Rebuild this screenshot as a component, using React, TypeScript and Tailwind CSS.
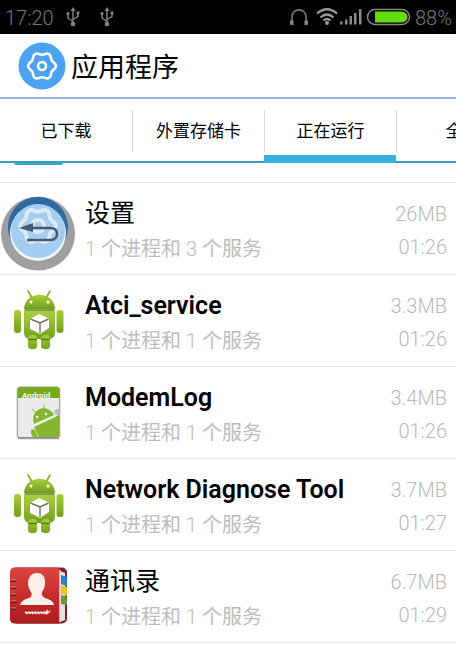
import React from "react";

const gear = (cx: number, cy: number, r: number, bump: number) => {
  const pts: string[] = [];
  for (let i = 0; i <= 96; i++) {
    const a = (i / 96) * Math.PI * 2;
    const d = r + bump * Math.cos(6 * a);
    pts.push(`${(cx + d * Math.cos(a)).toFixed(2)} ${(cy + d * Math.sin(a)).toFixed(2)}`);
  }
  return "M" + pts.join("L") + "Z";
};

function UsbIcon() {
  return (
    <svg width="14" height="20" viewBox="0 0 14 20" fill="none" stroke="#858585" strokeWidth="1.4" aria-hidden="true">
      <path d="M7 3V16M7 14.5L2 11V7M7 12.5L12 9.5V6" />
      <path d="M7 0L9.4 4H4.6Z" fill="#858585" stroke="none" />
      <circle cx="7" cy="17" r="2.3" fill="#858585" stroke="none" />
      <circle cx="2" cy="6.5" r="1.5" fill="#858585" stroke="none" />
      <rect x="10.6" y="4.5" width="2.8" height="2.8" fill="#858585" stroke="none" />
    </svg>
  );
}

function StatusIcons() {
  return (
    <svg width="122" height="20" viewBox="0 0 122 20" fill="none" aria-hidden="true">
      <path d="M3 17V10C3 0.500 17 0.500 17 10V17" stroke="#777" strokeWidth="1.600" />
      <path d="M1 13.500H4.500V18H2Q1 18 1 16.500ZM15.500 13.500H19V16.500Q19 18 18 18H15.500Z" fill="#888" />
      <g stroke="#999" strokeWidth="2.200">
        <path d="M28 6.500Q38 -2 48 6.500" />
        <path d="M31.500 10.500Q38 4.500 44.500 10.500" />
        <path d="M34.500 13.500Q38 10.500 41.500 13.500" />
      </g>
      <circle cx="38" cy="16" r="2" fill="#999" />
      <path d="M51 14.500h2.500v3h-2.500zM56 12.500h2.500v5h-2.500zM60.500 9h2.500v8.500h-2.500zM65 6h2.500v11.500h-2.500zM70 2h2.500v15.500h-2.500z" fill="#8a8a8a" />
      <rect x="78.500" y="2.500" width="42" height="15" rx="7.500" stroke="#888" strokeWidth="1.500" />
      <path d="M86 4.500H112Q118.500 5 118.500 10T112 15.500H86Z" fill="#63dc10" />
    </svg>
  );
}

function HeaderIcon() {
  return (
    <svg width="48" height="48" viewBox="0 0 48 48" fill="none" aria-hidden="true">
      <circle cx="24" cy="24" r="23.500" fill="#4ba3f2" />
      <path d={gear(24, 24, 12.5, 1.3)} stroke="#fff" strokeWidth="2.600" />
      <circle cx="24" cy="24" r="4" stroke="#fff" strokeWidth="2.600" />
    </svg>
  );
}

function SettingsIcon() {
  return (
    <svg width="78" height="91" viewBox="0 1 78 91" fill="none" aria-hidden="true">
      <circle cx="38" cy="51.500" r="37" fill="#9e9fa1" />
      <circle cx="38" cy="45" r="30" fill="#2e6a9e" />
      <circle cx="38" cy="51" r="28" fill="#f0f6fb" />
      <circle cx="38" cy="49" r="27" fill="#a5cdf2" />
      <path d={gear(38, 44, 16, 1.7)} stroke="#dcebf9" strokeWidth="4" />
      <circle cx="38" cy="44" r="6" stroke="#dcebf9" strokeWidth="4" />
      <path d="M25 46H50Q57 46 57 52T50 58H27" stroke="#48586c" strokeWidth="2.400" />
      <path d="M19 46L33 41V50Z" fill="#48586c" />
    </svg>
  );
}

function RobotIcon({ id }: { id: string }) {
  return (
    <svg width="78" height="91" viewBox="0 1 78 91" fill="none" aria-hidden="true">
      <defs>
        <linearGradient id={id} x1="0" y1="0" x2="0" y2="1">
          <stop offset="0" stopColor="#a9cf3a" />
          <stop offset="1" stopColor="#719f1c" />
        </linearGradient>
      </defs>
      <path d="M28 17L32 24M50 17L46 24" stroke="#80a82d" strokeWidth="1.600" strokeLinecap="round" />
      <g fill={`url(#${id})`}>
        <path d="M24 35C25 16 54 16 55 35Z" />
        <path d="M24 37H55V58Q55 65 49 65H30Q24 65 24 58Z" />
        <rect x="14" y="36" width="7" height="23" rx="3" />
        <rect x="56.500" y="36" width="7" height="23" rx="3" />
        <rect x="28" y="61" width="9" height="14" rx="3.500" />
        <rect x="41" y="61" width="9" height="14" rx="3.500" />
      </g>
      <path d="M24.500 36H54.500M28 65.500H37M41 65.500H50" stroke="#567d18" strokeWidth="1.400" />
      <circle cx="31" cy="28" r="1.500" fill="#fff" />
      <circle cx="48" cy="28" r="1.500" fill="#fff" />
      <path d="M39 40L49 44.500V54L40 60L30 55V45Z" fill="#fff" />
      <path d="M30.500 45L40 49L48.500 45M40 49V59" stroke="#6b7554" strokeWidth="1.400" />
    </svg>
  );
}

function ModemIcon() {
  return (
    <svg width="78" height="91" viewBox="0 1 78 91" fill="none" aria-hidden="true">
      <rect x="16.500" y="21" width="44" height="52.500" rx="4" fill="#cfcfcf" />
      <rect x="17.500" y="21" width="42" height="50.500" rx="2.500" fill="#ebebeb" stroke="#a5a5a5" />
      <path d="M17.500 32V23.500Q17.500 21 20.500 21H57Q59.500 21 59.500 23.500V32Z" fill="#76a91c" />
      <text x="22" y="32" fill="#f5faeb" fontSize="8" fontWeight="700" fontFamily="Roboto, sans-serif">Android</text>
      <circle cx="57.500" cy="46" r="3" fill="#bbb" />
      <g fill="#85b62e">
        <path d="M34 58C29 43 47 36 54 49Z" />
        <path d="M34 61L55 51L59 49V71H39Z" />
        <path d="M31 64Q34 62 36 66L38 71H33Q30 67 31 64Z" />
      </g>
      <path d="M36 47L32 43M44 43V39" stroke="#85b62e" strokeLinecap="round" />
      <circle cx="37" cy="51" r="1.200" fill="#fff" />
      <circle cx="46" cy="48" r="1.200" fill="#fff" />
      <path d="M34 59.500L55 50" stroke="#f2f2f2" strokeWidth="1.500" />
      <path d="M18 72H59" stroke="#777" />
    </svg>
  );
}

function ContactsIcon() {
  return (
    <svg width="78" height="91" viewBox="0 1 78 91" fill="none" aria-hidden="true">
      <defs>
        <linearGradient id="book" x1="0" y1="0" x2="0" y2="1">
          <stop offset="0" stopColor="#dc4540" />
          <stop offset="0.550" stopColor="#c52a2a" />
          <stop offset="1" stopColor="#a91b1d" />
        </linearGradient>
      </defs>
      <rect x="11" y="17.500" width="56" height="56" rx="5" fill="#7d2226" />
      <path d="M60 21L65 23V70L60 72Z" fill="#e6e2dc" />
      <path d="M61 25L67 27V36L61 34Z" fill="#2583c6" />
      <path d="M61 35L67 37V46L61 44Z" fill="#efc22d" />
      <path d="M61 45L67 47V55L61 54Z" fill="#5c9c38" />
      <path d="M15 17.500H56Q60 17.500 60 21V73.500H15Q10 73.500 10 69V22Q10 17.500 15 17.500Z" fill="url(#book)" />
      <path d="M60 20V72" stroke="#f1dada" strokeWidth="1.500" />
      <path d="M20 55Q21 50 29 48Q33 46 31 42Q28 38 28 32Q29 23 37 23T45 32Q45 38 42 42Q41 46 45 48Q53 50 54 55Z" fill="#fceeea" />
      <g stroke="#591b20" strokeWidth="2">
        <path d="M11 31H16M11 38H16M11 45H16M11 52H16M11 59H16" />
      </g>
      <g stroke="#d9a5a3" strokeWidth="0.800">
        <path d="M11 30H16M11 37H16M11 44H16M11 51H16M11 58H16" />
      </g>
      <path d="M25 63L26 62L27 63.500L29 62L30 63.500L32 62L33 63.500L35 62L36 63.500L38 62L39 63.500L41 62L42 63.500L44 62L45 63.500L47 61V63.500L50 61" stroke="#fbe9e8" strokeWidth="1.400" />
    </svg>
  );
}

const tabs = ["已下载", "外置存储卡", "正在运行", "全部"];

const apps = [
  { name: "设置", latin: false, services: 3, size: "26MB", time: "01:26", icon: <SettingsIcon /> },
  { name: "Atci_service", latin: true, services: 1, size: "3.3MB", time: "01:26", icon: <RobotIcon id="robot-atci" /> },
  { name: "ModemLog", latin: true, services: 1, size: "3.4MB", time: "01:26", icon: <ModemIcon /> },
  { name: "Network Diagnose Tool", latin: true, services: 1, size: "3.7MB", time: "01:27", icon: <RobotIcon id="robot-network" /> },
  { name: "通讯录", latin: false, services: 1, size: "6.7MB", time: "01:29", icon: <ContactsIcon /> },
];

export default function App() {
  return (
    <div className="min-h-screen overflow-hidden bg-white font-['Roboto','Noto_Sans_CJK_SC',sans-serif] text-black">
      <div className="flex h-[34px] items-center bg-black pl-[5px] text-xl font-light text-[#777]">
        <span className="pt-0.5">17:20</span>
        <span className="ml-3 flex gap-5">
          <UsbIcon />
          <UsbIcon />
        </span>
        <span className="ml-auto flex items-center gap-1 pr-1">
          <StatusIcons />
          <span className="pt-0.5">88%</span>
        </span>
      </div>

      <header className="flex h-[65px] items-center gap-[5px] border-b-2 border-[#93bbdf] pl-[18px]">
        <HeaderIcon />
        <h1 className="pt-1 text-[27px] leading-9">应用程序</h1>
      </header>

      <nav className="flex h-16 overflow-hidden">
        {tabs.map((tab, i) => (
          <button
            key={tab}
            type="button"
            aria-current={i === 2 ? "page" : undefined}
            className={
              i === 2
                ? "flex w-[132px] shrink-0 flex-col border-b-8 border-[#37b1df] pt-[11px]"
                : "flex w-[132px] shrink-0 flex-col border-b-2 border-[#3b9fc5] pt-[11px]"
            }
          >
            <span
              className={
                i === 0
                  ? "flex h-[42px] w-full items-center justify-center pt-0.5 text-[17px]"
                  : "flex h-[42px] w-full items-center justify-center border-l border-[#dcdcdc] pt-0.5 text-[17px]"
              }
            >
              {tab}
            </span>
          </button>
        ))}
      </nav>

      <ul>
        <li className="h-5 border-b border-[#e2e2e2] px-[14px]">
          <div className="h-[2px] w-[49px] rounded-b-full bg-[#35a9cf]" />
        </li>
        {apps.map((app) => (
          <li key={app.name} className="flex h-[92px] items-start border-b border-[#e2e2e2] pr-[9px]">
            <span className="shrink-0">{app.icon}</span>
            <div className="ml-[7px] min-w-0 flex-1 pt-[13px]">
              <h2
                className={
                  app.latin
                    ? "truncate text-[25px] leading-9 font-semibold"
                    : "truncate text-[25px] leading-9 font-normal"
                }
              >
                {app.name}
              </h2>
              <p className="text-xl leading-[34px] text-[#bdbdbd]">
                <span className="font-light">1</span> 个进程和 <span className="font-light">{app.services}</span> 个服务
              </p>
            </div>
            <div className="shrink-0 pt-[15px] text-right text-xl leading-[33px] font-light text-[#b8b8b8]">
              <p>{app.size}</p>
              <p>{app.time}</p>
            </div>
          </li>
        ))}
      </ul>
    </div>
  );
}
